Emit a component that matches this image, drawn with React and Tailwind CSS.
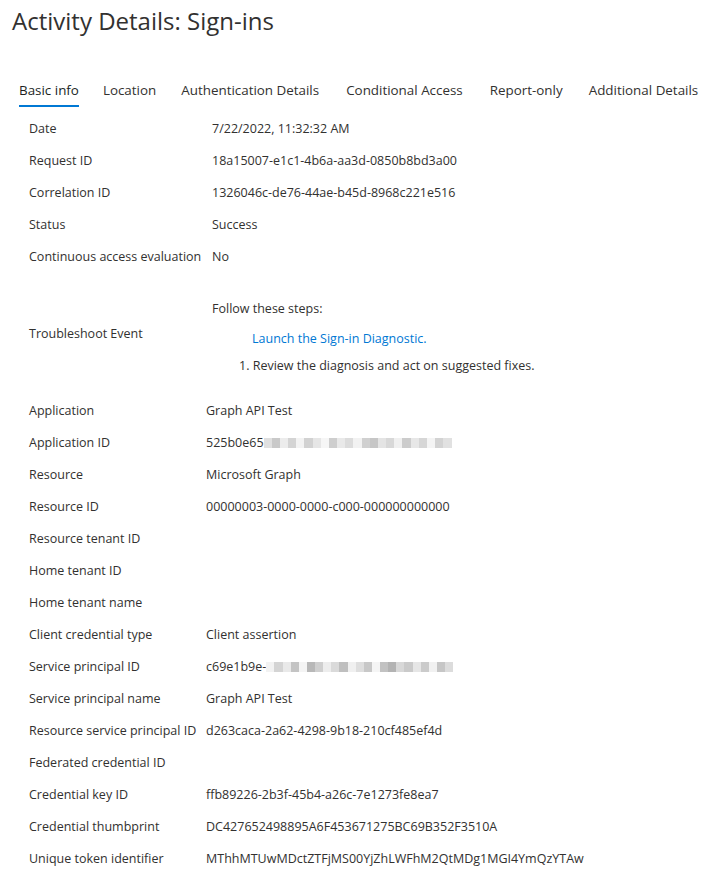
const rowsTop = [
  ['Date', '7/22/2022, 11:32:32 AM'],
  ['Request ID', '18a15007-e1c1-4b6a-aa3d-0850b8bd3a00'],
  ['Correlation ID', '1326046c-de76-44ae-b45d-8968c221e516'],
  ['Status', 'Success'],
  ['Continuous access evaluation', 'No'],
]

const rowsBottom = [
  ['Application', 'Graph API Test'],
  ['Application ID', 'blur-app'],
  ['Resource', 'Microsoft Graph'],
  ['Resource ID', '00000003-0000-0000-c000-000000000000'],
  ['Resource tenant ID', ''],
  ['Home tenant ID', ''],
  ['Home tenant name', ''],
  ['Client credential type', 'Client assertion'],
  ['Service principal ID', 'blur-sp'],
  ['Service principal name', 'Graph API Test'],
  ['Resource service principal ID', 'd263caca-2a62-4298-9b18-210cf485ef4d'],
  ['Federated credential ID', ''],
  ['Credential key ID', 'ffb89226-2b3f-45b4-a26c-7e1273fe8ea7'],
  ['Credential thumbprint', 'DC427652498895A6F453671275BC69B352F3510A'],
  ['Unique token identifier', 'MThhMTUwMDctZTFjMS00YjZhLWFhM2QtMDg1MGI4YmQzYTAw'],
]

const tabs = [
  ['Basic info', 'mr-[24px]'],
  ['Location', 'mr-[25px]'],
  ['Authentication Details', 'mr-[27px]'],
  ['Conditional Access', 'mr-[27px]'],
  ['Report-only', 'mr-[26px]'],
  ['Additional Details', ''],
]

// pixelated blur blocks, shades picked from the screenshot
const appBlur = ['#e0e0e0', '#c9c9c9', '#ececec', '#d4d4d4', '#f3f3f3', '#d2d2d2', '#e6e6e6', '#f6f6f6', '#cecece', '#e9e9e9', '#dcdcdc', '#f2f2f2', '#d0d0d0', '#c6c6c6', '#e4e4e4', '#d8d8d8', '#f0f0f0', '#cccccc', '#e7e7e7', '#d6d6d6', '#f4f4f4', '#d3d3d3', '#e1e1e1']
const spBlur = ['#f2f2f2', '#d4d4d4', '#e9e9e9', '#c4c4c4', '#f4f4f4', '#b8b8b8', '#cfcfcf', '#ededed', '#dadada', '#bfbfbf', '#f0f0f0', '#dedede', '#c8c8c8', '#f5f5f5', '#c2c2c2', '#b3b3b3', '#d8d8d8', '#cacaca', '#e6e6e6', '#cbcbcb', '#f1f1f1', '#c6c6c6', '#dcdcdc']

function Blur({ prefix, shades, width }) {
  return (
    <span className="flex items-center">
      <span>{prefix}</span>
      <span className="flex h-[10px]" style={{ width }}>
        {shades.map((c, i) => (
          <span key={i} className="h-full flex-1" style={{ backgroundColor: c }} />
        ))}
      </span>
    </span>
  )
}

function Value({ v }) {
  if (v === 'blur-app') return <Blur prefix="525b0e65" shades={appBlur} width={188} />
  if (v === 'blur-sp') return <Blur prefix="c69e1b9e-" shades={spBlur} width={187} />
  return <span>{v}</span>
}

export default function App() {
  return (
    <div className="min-h-[887px] bg-white text-[#323130] font-['Segoe_UI','Open_Sans',sans-serif] text-[12.5px]">
      <h1 className="pl-3 pt-[5px] text-[24px] leading-[32px] font-normal text-[#323130]">Activity Details: Sign-ins</h1>

      <nav className="mt-[42px] flex pl-[19px] text-[13.4px] whitespace-nowrap">
        {tabs.map(([t, m], i) => (
          <div
            key={t}
            className={
              m + ' pb-[4px] leading-[22px] ' +
              (i === 0 ? 'border-b-2 border-[#0078d4] text-[#201f1e]' : 'border-b-2 border-transparent text-[#323130]')
            }
          >
            {t}
          </div>
        ))}
      </nav>

      <div className="pl-[29px] mt-[6px] whitespace-nowrap">
        {rowsTop.map(([k, v]) => (
          <div key={k} className="flex h-8 items-center">
            <div className="w-[183px] shrink-0">{k}</div>
            <Value v={v} />
          </div>
        ))}

        <div className="flex h-[122px] items-center">
          <div className="w-[183px] shrink-0">Troubleshoot Event</div>
          <div className="flex h-full flex-col">
            <div className="mt-[26px] leading-5">Follow these steps:</div>
            <a className="mt-[10px] ml-[40px] leading-5 text-[#0078d4]" href="#">
              Launch the Sign-in Diagnostic.
            </a>
            <ol className="mt-[7px] ml-[27px] leading-5">
              <li>1. Review the diagnosis and act on suggested fixes.</li>
            </ol>
          </div>
        </div>

        {rowsBottom.map(([k, v]) => (
          <div key={k} className="flex h-8 items-center">
            <div className="w-[177px] shrink-0">{k}</div>
            <Value v={v} />
          </div>
        ))}
      </div>
    </div>
  )
}
